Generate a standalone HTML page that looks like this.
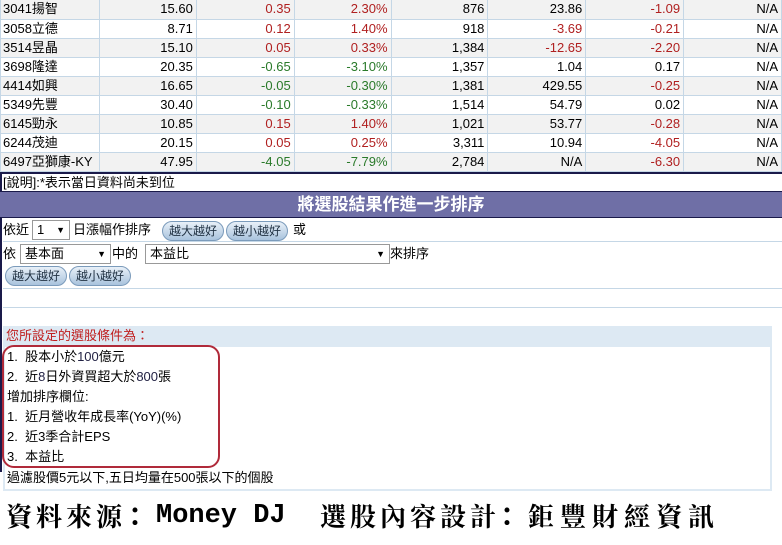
<!DOCTYPE html>
<html><head><meta charset="utf-8"><style>
*{margin:0;padding:0;box-sizing:border-box}
body{width:782px;height:545px;background:#fff;position:relative;overflow:hidden;font-family:"Liberation Sans","Noto Sans CJK TC",sans-serif;font-size:13px;color:#000}
.a{position:absolute}
table{border-collapse:collapse;position:absolute;left:0;top:0;width:782px}
td{height:19.1px;border:1px solid #c5d7e6;border-top:none;text-align:right;padding:0 3px 0 0;font-size:13px;line-height:18px;white-space:nowrap}
td:first-child{text-align:left;padding-left:2px}
tr:nth-child(odd){background:#f2f2f2}
.r{color:#b02020}.g{color:#2a7a2a}
.btn{position:absolute;height:20px;border-radius:10px;background:linear-gradient(#e8f0f8,#a9c3dd);border:1px solid #7b9bbb;font-size:12px;color:#234;line-height:18px;padding:0 6px}
.sel{position:absolute;height:20px;border:1px solid #999;background:#fff;font-size:13px;line-height:18px;padding-left:4px}
.sel:after{content:"▼";position:absolute;right:4px;top:0;font-size:9px}
.hl{position:absolute;left:3px;right:0;height:1px;background:#c5d7e6}
.cond div{height:20px;line-height:20px;font-size:13px}
.b{color:#224}
.ft{position:absolute;top:500px;font-weight:bold;font-size:26px;line-height:32px;white-space:nowrap}
.cj{font-family:"Noto Serif CJK SC",serif;letter-spacing:4px}
.co{font-family:"Noto Sans CJK TC",sans-serif}
.mo{font-family:"Liberation Mono",monospace;font-size:27px}
</style></head><body>
<table>
<colgroup><col style="width:99px"><col style="width:97px"><col style="width:98px"><col style="width:97px"><col style="width:97px"><col style="width:98px"><col style="width:98px"><col style="width:98px"></colgroup>
<tr><td>3041揚智</td><td>15.60</td><td class="r">0.35</td><td class="r">2.30%</td><td>876</td><td>23.86</td><td class="r">-1.09</td><td>N/A</td></tr>
<tr><td>3058立德</td><td>8.71</td><td class="r">0.12</td><td class="r">1.40%</td><td>918</td><td class="r">-3.69</td><td class="r">-0.21</td><td>N/A</td></tr>
<tr><td>3514昱晶</td><td>15.10</td><td class="r">0.05</td><td class="r">0.33%</td><td>1,384</td><td class="r">-12.65</td><td class="r">-2.20</td><td>N/A</td></tr>
<tr><td>3698隆達</td><td>20.35</td><td class="g">-0.65</td><td class="g">-3.10%</td><td>1,357</td><td>1.04</td><td>0.17</td><td>N/A</td></tr>
<tr><td>4414如興</td><td>16.65</td><td class="g">-0.05</td><td class="g">-0.30%</td><td>1,381</td><td>429.55</td><td class="r">-0.25</td><td>N/A</td></tr>
<tr><td>5349先豐</td><td>30.40</td><td class="g">-0.10</td><td class="g">-0.33%</td><td>1,514</td><td>54.79</td><td>0.02</td><td>N/A</td></tr>
<tr><td>6145勁永</td><td>10.85</td><td class="r">0.15</td><td class="r">1.40%</td><td>1,021</td><td>53.77</td><td class="r">-0.28</td><td>N/A</td></tr>
<tr><td>6244茂迪</td><td>20.15</td><td class="r">0.05</td><td class="r">0.25%</td><td>3,311</td><td>10.94</td><td class="r">-4.05</td><td>N/A</td></tr>
<tr><td>6497亞獅康-KY</td><td>47.95</td><td class="g">-4.05</td><td class="g">-7.79%</td><td>2,784</td><td>N/A</td><td class="r">-6.30</td><td>N/A</td></tr>
</table>
<div class="a" style="left:0;top:172px;width:782px;height:2px;background:#1a1a4a"></div>
<div class="a" style="left:0;top:172px;width:2px;height:300px;background:#1a1a4a"></div>
<div class="a" style="left:3px;top:174px;font-size:13px;line-height:17px">[說明]:*表示當日資料尚未到位</div>
<div class="a" style="left:0;top:191px;width:782px;height:27px;background:#6f6fa6;border-top:1px solid #1a1a4a;border-bottom:1px solid #1a1a4a;color:#fff;font-weight:bold;font-size:17px;text-align:center;line-height:25px">將選股結果作進一步排序</div>
<div class="a" style="left:3px;top:221px;line-height:18px">依近</div>
<div class="sel" style="left:32px;top:220px;width:38px">1</div>
<div class="a" style="left:73px;top:221px;line-height:18px">日漲幅作排序</div>
<div class="btn" style="left:162px;top:221px">越大越好</div>
<div class="btn" style="left:226px;top:221px">越小越好</div>
<div class="a" style="left:293px;top:221px;line-height:18px">或</div>
<div class="hl" style="top:241px"></div>
<div class="a" style="left:3px;top:245px;line-height:18px">依</div>
<div class="sel" style="left:20px;top:244px;width:91px">基本面</div>
<div class="a" style="left:112px;top:245px;line-height:18px">中的</div>
<div class="sel" style="left:145px;top:244px;width:245px">本益比</div>
<div class="a" style="left:390px;top:245px;line-height:18px">來排序</div>
<div class="btn" style="left:5px;top:266px">越大越好</div>
<div class="btn" style="left:69px;top:266px">越小越好</div>
<div class="hl" style="top:288px"></div>
<div class="hl" style="top:307px"></div>
<div class="a" style="left:3px;top:326px;width:769px;height:165px;border:2px solid #dde9f3;border-top:none"></div>
<div class="a" style="left:3px;top:326px;width:769px;height:21px;background:#dde9f3;color:#c02020;line-height:20px;padding-left:3px">您所設定的選股條件為：</div>
<div class="a" style="left:2px;top:345px;width:218px;height:123px;border:2px solid #b02a3a;border-radius:12px"></div>
<div class="a cond" style="left:7px;top:347px">
<div>1.&nbsp; 股本小於<span class="b">100</span>億元</div>
<div>2.&nbsp; 近<span class="b">8</span>日外資買超大於<span class="b">800</span>張</div>
<div>增加排序欄位:</div>
<div>1.&nbsp; 近月營收年成長率(YoY)(%)</div>
<div>2.&nbsp; 近3季合計EPS</div>
<div>3.&nbsp; 本益比</div>
</div>
<div class="a" style="left:7px;top:469px;line-height:18px">過濾股價5元以下,五日均量在500張以下的個股</div>
<div class="ft cj" style="left:6px">資料來源</div>
<div class="ft co" style="left:122px">：</div>
<div class="ft mo" style="left:156px">Money DJ</div>
<div class="ft cj" style="left:320px">選股內容設計</div>
<div class="ft co" style="left:494px">：</div>
<div class="ft cj" style="left:528px;letter-spacing:6px">鉅豐財經資訊</div>
</body></html>
